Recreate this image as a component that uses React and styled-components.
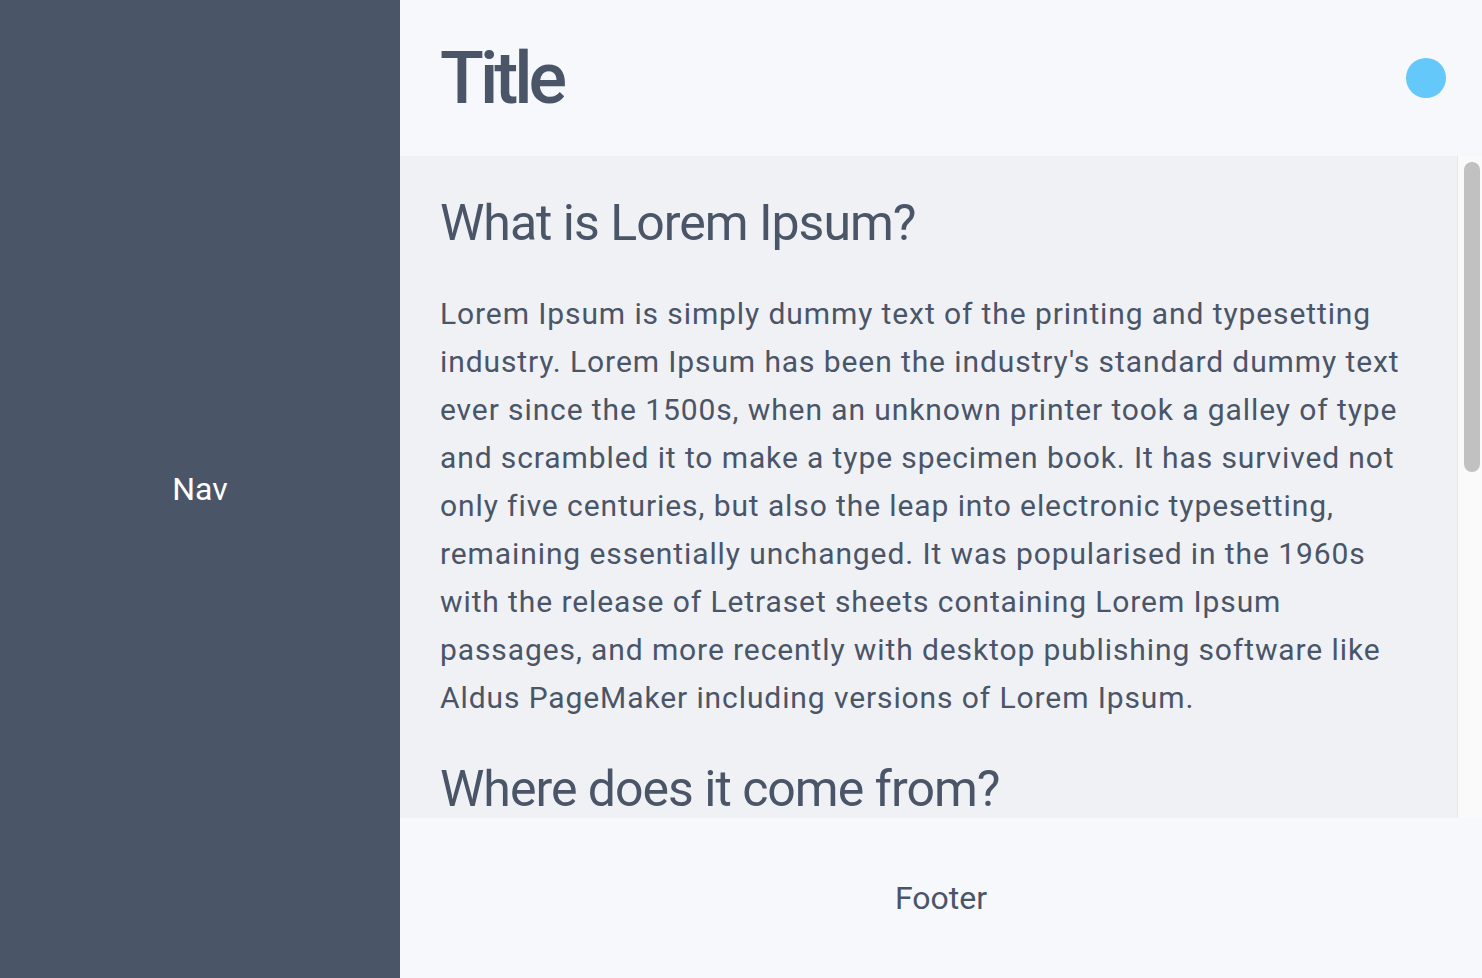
import React from 'react'
import styled, { createGlobalStyle } from 'styled-components'

const GlobalStyle = createGlobalStyle`
  html, body {
    margin: 0;
    padding: 0;
    height: 100%;
  }

  body {
    font-family: Roboto, 'Liberation Sans', sans-serif;
    color: #4a5568;
  }
`

const Layout = styled.div`
  display: grid;
  grid-template-columns: 400px 1fr;
  grid-template-rows: 100vh;
  height: 100vh;
  overflow: hidden;
`

const Nav = styled.nav`
  display: flex;
  align-items: center;
  justify-content: center;
  background-color: #4a5568;
  color: #ffffff;
  font-size: 32px;
`

const Main = styled.div`
  display: grid;
  grid-template-rows: 156px minmax(0, 1fr) 160px;
  min-height: 0;
  min-width: 0;
  background-color: #f7f8fc;
`

const Header = styled.header`
  display: flex;
  align-items: center;
  justify-content: space-between;
  padding: 0 36px 0 40px;
`

const Title = styled.h1`
  margin: 0;
  font-size: 72px;
  font-weight: 500;
  letter-spacing: -4px;
`

const Avatar = styled.div`
  width: 40px;
  height: 40px;
  border-radius: 50%;
  background-color: #64c8fa;
`

const ContentArea = styled.div`
  display: flex;
  min-height: 0;
`

const Content = styled.main`
  flex: 1;
  min-width: 0;
  overflow: hidden;
  padding: 38px 40px;
  background-color: #f0f1f5;
`

const ScrollTrack = styled.div`
  box-sizing: border-box;
  flex: 0 0 25px;
  padding: 6px 2px 0 6px;
  background-color: #fafafa;
  border-left: 1px solid #e8e8e8;
`

const ScrollThumb = styled.div`
  height: 310px;
  border-radius: 8px;
  background-color: #c1c1c1;
`

const Heading = styled.h2`
  margin: 0 0 38px;
  font-size: 50px;
  font-weight: 400;
  letter-spacing: -1px;
`

const Paragraph = styled.p`
  margin: 0 0 38px;
  font-size: 30px;
  line-height: 48px;
  letter-spacing: 0.9px;
`

const Footer = styled.footer`
  display: flex;
  align-items: center;
  justify-content: center;
  font-size: 32px;
`

export default function App() {
  return (
    <>
      <GlobalStyle />
      <Layout>
        <Nav>Nav</Nav>
        <Main>
          <Header>
            <Title>Title</Title>
            <Avatar />
          </Header>
          <ContentArea>
            <Content>
              <Heading>What is Lorem Ipsum?</Heading>
              <Paragraph>
                Lorem Ipsum is simply dummy text of the printing and typesetting industry. Lorem Ipsum has been the
                industry's standard dummy text ever since the 1500s, when an unknown printer took a galley of type and
                scrambled it to make a type specimen book. It has survived not only five centuries, but also the leap
                into electronic typesetting, remaining essentially unchanged. It was popularised in the 1960s with the
                release of Letraset sheets containing Lorem Ipsum passages, and more recently with desktop publishing
                software like Aldus PageMaker including versions of Lorem Ipsum.
              </Paragraph>
              <Heading>Where does it come from?</Heading>
            </Content>
            <ScrollTrack>
              <ScrollThumb />
            </ScrollTrack>
          </ContentArea>
          <Footer>Footer</Footer>
        </Main>
      </Layout>
    </>
  )
}
